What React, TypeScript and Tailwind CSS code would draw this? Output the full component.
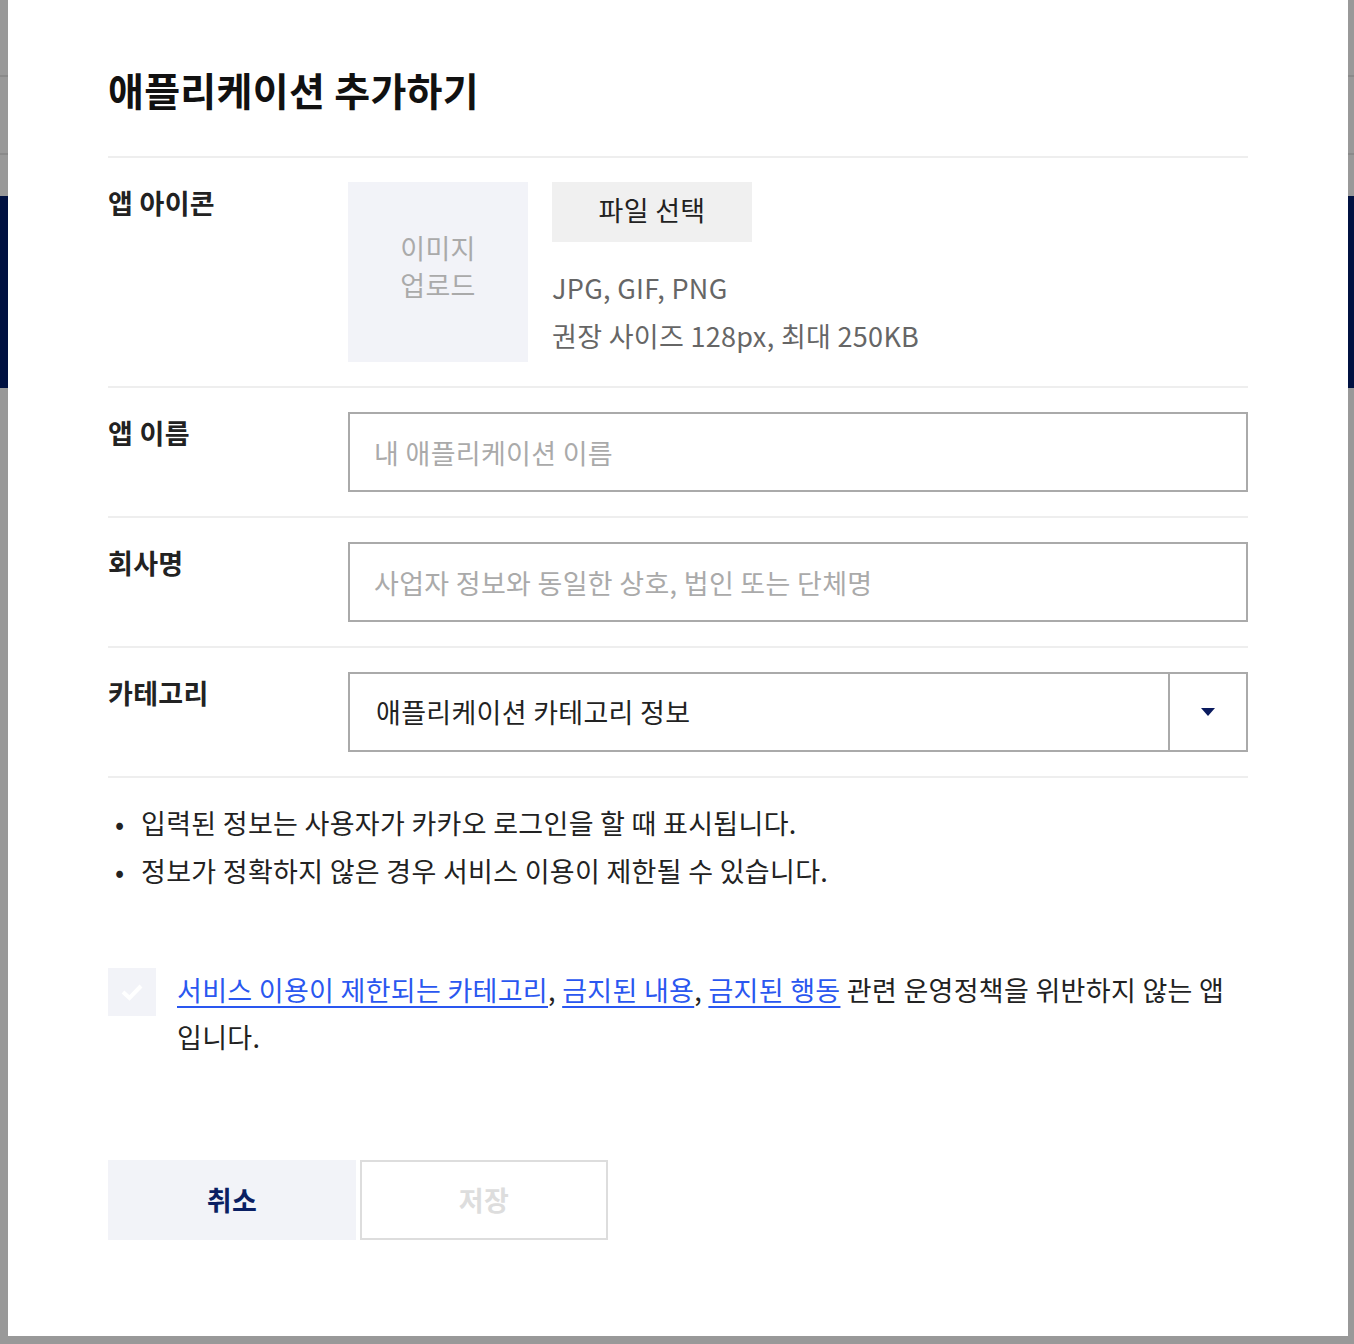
const font = { fontFamily: '"Noto Sans CJK KR", "Noto Sans", sans-serif' };

const Row = ({ label, children }: { label: string; children: React.ReactNode }) => (
  <div className="flex border-b-2 border-[#eeeeee] py-[24px]">
    <div className="mt-[1px] w-[240px] shrink-0 text-[27px] font-bold leading-[40px] text-[#222]">
      {label}
    </div>
    <div className="flex-1">{children}</div>
  </div>
);

const App = () => {
  return (
    <div className="relative h-[1344px] w-[1354px] overflow-hidden bg-[#999999]" style={font}>
      {/* page behind the dim layer */}
      <div className="flex h-[196px] flex-col">
        <div className="h-[77px] border-b-2 border-[#8a8a8a]" />
        <div className="h-[78px] border-b-2 border-[#8a8a8a]" />
      </div>
      <div className="h-[192px] bg-[#001141]" />

      {/* modal */}
      <div className="absolute left-[8px] top-0 h-[1336px] w-[1340px] bg-white px-[100px] tracking-[0.3px]">
        <h1 className="pt-[62px] pb-[40px] text-[39px] font-bold leading-[54px] text-[#111]">
          애플리케이션 추가하기
        </h1>
        <div className="border-t-2 border-[#eeeeee]">
          <Row label="앱 아이콘">
            <div className="flex gap-[24px]">
              <div className="flex h-[180px] w-[180px] items-center justify-center bg-[#f2f3f8] text-center text-[27px] leading-[37px] text-[#aaaaaa]">
                <span className="-mt-[12px]">
                  이미지
                  <br />
                  업로드
                </span>
              </div>
              <div className="flex flex-col">
                <button className="h-[60px] w-[200px] bg-[#f0f0f0] pb-[4px] text-[27px] text-[#222]">
                  파일 선택
                </button>
                <div className="mt-[22px] text-[27px] leading-[48px] text-[#666666]">
                  <p>JPG, GIF, PNG</p>
                  <p>권장 사이즈 128px, 최대 250KB</p>
                </div>
              </div>
            </div>
          </Row>
          <Row label="앱 이름">
            <input
              className="h-[80px] w-full border-2 border-[#aaaaaa] px-[24px] text-[27px] text-[#222] outline-none placeholder:text-[#aaaaaa]"
              placeholder="내 애플리케이션 이름"
            />
          </Row>
          <Row label="회사명">
            <input
              className="h-[80px] w-full border-2 border-[#aaaaaa] px-[24px] text-[27px] text-[#222] outline-none placeholder:text-[#aaaaaa]"
              placeholder="사업자 정보와 동일한 상호, 법인 또는 단체명"
            />
          </Row>
          <Row label="카테고리">
            <div className="flex h-[80px] w-full border-2 border-[#aaaaaa]">
              <div className="flex flex-1 items-center px-[26px] text-[27px] text-[#222]">
                애플리케이션 카테고리 정보
              </div>
              <div className="flex w-[78px] items-center justify-center border-l-2 border-[#aaaaaa]">
                <svg width="16" height="10" viewBox="0 0 16 10">
                  <path d="M1 1 H15 L8 9 Z" fill="#0a1a5e" />
                </svg>
              </div>
            </div>
          </Row>
        </div>

        <ul className="pt-[21px] text-[27px] leading-[48px] text-[#222]">
          <li className="flex">
            <span className="w-[33px] pl-[7px]">•</span>입력된 정보는 사용자가 카카오 로그인을 할 때 표시됩니다.
          </li>
          <li className="flex">
            <span className="w-[33px] pl-[7px]">•</span>정보가 정확하지 않은 경우 서비스 이용이 제한될 수 있습니다.
          </li>
        </ul>

        <div className="mt-[71px] flex gap-[21px]">
          <div className="mt-[2px] flex h-[48px] w-[48px] shrink-0 items-center justify-center bg-[#f2f3f8]">
            <svg width="26" height="20" viewBox="0 0 26 20">
              <path d="M4 10 L10.5 16 L22 4" fill="none" stroke="#ffffff" strokeWidth="4" />
            </svg>
          </div>
          <p className="text-[27px] leading-[47px] text-[#222]">
            <a className="text-[#2a57f0] underline underline-offset-[5px]" href="#">
              서비스 이용이 제한되는 카테고리
            </a>
            <span>, </span>
            <a className="text-[#2a57f0] underline underline-offset-[5px]" href="#">
              금지된 내용
            </a>
            <span>, </span>
            <a className="text-[#2a57f0] underline underline-offset-[5px]" href="#">
              금지된 행동
            </a>
            <span> 관련 운영정책을 위반하지 않는 앱입니다.</span>
          </p>
        </div>

        <div className="mt-[100px] flex gap-[4px]">
          <button className="h-[80px] w-[248px] bg-[#f2f3f8] text-[27px] font-bold text-[#0a1f63]">
            취소
          </button>
          <button className="h-[80px] w-[248px] border-2 border-[#dddddd] bg-white text-[27px] font-bold text-[#dddddd]">
            저장
          </button>
        </div>
      </div>
    </div>
  );
};

export default App;
